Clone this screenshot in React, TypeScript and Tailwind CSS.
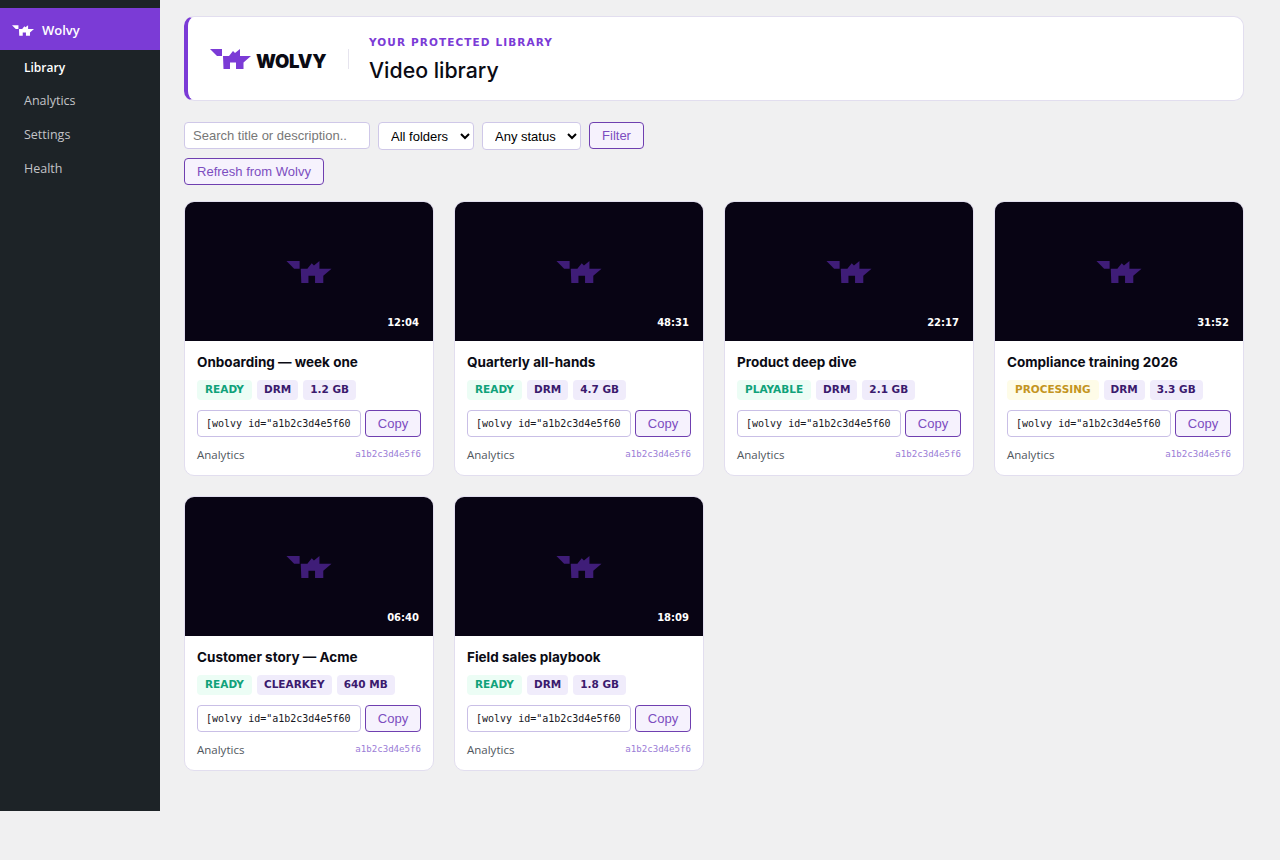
const videos = [
  { title: "Onboarding — week one", time: "12:04", status: "READY", drm: "DRM", size: "1.2 GB" },
  { title: "Quarterly all-hands", time: "48:31", status: "READY", drm: "DRM", size: "4.7 GB" },
  { title: "Product deep dive", time: "22:17", status: "PLAYABLE", drm: "DRM", size: "2.1 GB" },
  { title: "Compliance training 2026", time: "31:52", status: "PROCESSING", drm: "DRM", size: "3.3 GB" },
  { title: "Customer story — Acme", time: "06:40", status: "READY", drm: "CLEARKEY", size: "640 MB" },
  { title: "Field sales playbook", time: "18:09", status: "READY", drm: "DRM", size: "1.8 GB" },
]

function Mark({ className }: { className: string }) {
  return (
    <svg viewBox="0 0 41 20" className={className} fill="currentColor">
      <path d="M0 0H12V7H7Z" />
      <path d="M13 7H19L23 2L25 4L30 0V7H41L33.5 13.5V20H26V13.5H20V20H13.5Z" />
    </svg>
  )
}

function Pill({ label, tone }: { label: string; tone: string }) {
  return (
    <span className={`h-5 rounded-[4px] flex items-center font-['DejaVu_Sans',sans-serif] font-bold text-[10.5px] ${tone}`}>
      {label}
    </span>
  )
}

function statusTone(status: string) {
  if (status === "PROCESSING") return "px-2 bg-[#fefce8] text-[#c4951f]"
  return "px-2 bg-[#ecfdf5] text-[#10a27a]"
}

function VideoCard({ video }: { video: (typeof videos)[number] }) {
  return (
    <div className="bg-white border border-[#e2deef] rounded-[10px] overflow-hidden h-[275px]">
      <div className="relative h-[139px] bg-[#080414] flex items-center justify-center">
        <Mark className="w-[46px] h-[22px] text-[#3f1d78]" />
        <span className="absolute right-[14px] bottom-[12px] font-['DejaVu_Sans',sans-serif] font-bold text-[10px] leading-[12px] text-white">
          {video.time}
        </span>
      </div>
      <div className="px-3 pt-[11px]">
        <div className="h-[20px] font-['Inter',sans-serif] font-bold text-[13.5px] leading-[20px] text-[#0b0b14]">
          {video.title}
        </div>
        <div className="flex gap-[5px] mt-2">
          <Pill label={video.status} tone={statusTone(video.status)} />
          <Pill label={video.drm} tone="px-[7px] bg-[#f0ecfb] text-[#3b1a6e]" />
          <Pill label={video.size} tone="px-[7px] bg-[#f0ecfb] text-[#3b1a6e]" />
        </div>
        <div className="flex gap-1 mt-[10px]">
          <input
            readOnly
            value={'[wolvy id="a1b2c3d4e5f60'}
            className="w-[164px] h-[27px] px-2 border border-[#c9bfe6] rounded-[4px] bg-white font-['DejaVu_Sans_Mono',monospace] text-[10px] text-[#16161d] outline-none"
          />
          <button className="w-[56px] h-[27px] border border-[#6f3fb0] rounded-[4px] bg-[#f6f2fd] font-['Liberation_Sans',sans-serif] text-[13px] text-[#7c4dc0]">
            Copy
          </button>
        </div>
        <div className="flex items-center justify-between mt-[9px]">
          <span className="font-['Open_Sans',sans-serif] text-[11.5px] text-[#50575e]">Analytics</span>
          <span className="font-['DejaVu_Sans_Mono',monospace] text-[9.1px] text-[#9a7bd6]">a1b2c3d4e5f6</span>
        </div>
      </div>
    </div>
  )
}

export default function App() {
  return (
    <div className="min-h-[860px] bg-[#f0f0f1] flex items-start">
      <aside className="w-40 h-[811px] pt-2 bg-[#1d2327] shrink-0 font-['Open_Sans',sans-serif] text-[12.5px]">
        <div className="h-[42px] pl-3 pt-[3px] flex items-center gap-2 bg-[#7b3bd6] text-white font-semibold text-[13px]">
          <Mark className="w-[22px] h-[11px] text-white" />
          Wolvy
        </div>
        <nav className="flex flex-col pt-[1.4px]">
          {["Library", "Analytics", "Settings", "Health"].map((item, i) => (
            <a key={item} className={`h-[33.6px] pl-6 flex items-center ${i === 0 ? "text-white font-semibold text-[12px]" : "text-[#c3c4c7]"}`}>
              {item}
            </a>
          ))}
        </nav>
      </aside>
      <main className="w-[1060px] ml-6 pt-4">
        <header className="h-[85px] pl-[22px] flex items-center bg-white border border-[#e2deef] border-l-4 border-l-[#7b3bd6] rounded-[10px]">
          <div className="w-[117px] flex items-end gap-[5px] text-[#0b0b14]">
            <Mark className="w-[41px] h-[20px] shrink-0 text-[#7b3bd6]" />
            <span className="font-['Inter',sans-serif] font-black text-[18.5px] leading-[15px] tracking-[-0.2px]">WOLVY</span>
          </div>
          <div className="w-px h-5 ml-[21px] bg-[#e6e4ee]" />
          <div className="ml-5 pt-[2px]">
            <div className="font-['DejaVu_Sans',sans-serif] font-bold text-[10.5px] tracking-[1.1px] text-[#7b3bd6]">YOUR PROTECTED LIBRARY</div>
            <h1 className="mt-[5px] font-['Inter',sans-serif] font-medium text-[21.3px] leading-7 text-[#0b0b14]">Video library</h1>
          </div>
        </header>
        <div className="flex items-start gap-2 mt-[21px] font-['Liberation_Sans',sans-serif] text-[13px]">
          <input
            placeholder="Search title or description.."
            className="w-[186px] h-[27px] px-2 bg-white border border-[#cfc8e8] rounded-[4px] outline-none placeholder:text-[#777]"
          />
          <select className="w-[96px] h-7 pl-2 bg-white border border-[#cfc8e8] rounded-[4px] text-black outline-none appearance-auto">
            <option>All folders</option>
          </select>
          <select className="w-[99px] h-7 pl-2 bg-white border border-[#cfc8e8] rounded-[4px] text-black outline-none appearance-auto">
            <option>Any status</option>
          </select>
          <button className="w-[55px] h-[27px] bg-[#f6f2fd] border border-[#6f3fb0] rounded-[4px] text-[#7c4dc0]">Filter</button>
        </div>
        <button className="block w-[140px] h-[27px] mt-[8px] bg-[#f6f2fd] border border-[#6f3fb0] rounded-[4px] font-['Liberation_Sans',sans-serif] text-[13px] text-[#7c4dc0]">
          Refresh from Wolvy
        </button>
        <div className="grid grid-cols-4 gap-x-5 gap-y-5 mt-4">
          {videos.map((video) => (
            <VideoCard key={video.title} video={video} />
          ))}
        </div>
      </main>
    </div>
  )
}
